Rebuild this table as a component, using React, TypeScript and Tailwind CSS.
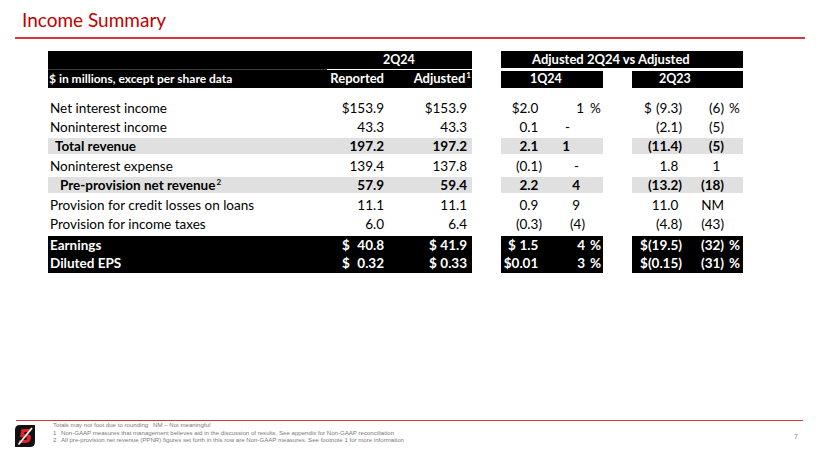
import React from 'react';

type Kind = 'n' | 'g' | 'k';
type Row = {
  label: string;
  sup?: string;
  kind: Kind;
  ind: string;
  band: string;
  rep: string;
  adj: string;
  a: string;
  b: string;
  bpr: string;
  bpct?: boolean;
  d: string;
  e: string;
  epct?: boolean;
};

const rows: Row[] = [
  { label: 'Net interest income', kind: 'n', ind: 'pl-[2px]', band: 'h-full', rep: '$153.9', adj: '$153.9', a: '$2.0', b: '1', bpr: 'pr-[5px]', bpct: true, d: '$ (9.3)', e: '(6)', epct: true },
  { label: 'Noninterest income', kind: 'n', ind: 'pl-[2px]', band: 'h-full', rep: '43.3', adj: '43.3', a: '0.1', b: '-', bpr: 'pr-[19px]', d: '(2.1)', e: '(5)' },
  { label: 'Total revenue', kind: 'g', ind: 'pl-[7px]', band: 'h-[16px] bg-[#e0e0e0]', rep: '197.2', adj: '197.2', a: '2.1', b: '1', bpr: 'pr-[19px]', d: '(11.4)', e: '(5)' },
  { label: 'Noninterest expense', kind: 'n', ind: 'pl-[2px]', band: 'h-full', rep: '139.4', adj: '137.8', a: '(0.1)', b: '-', bpr: 'pr-[10px]', d: '1.8', e: '1' },
  { label: 'Pre-provision net revenue', sup: '2', kind: 'g', ind: 'pl-[12px]', band: 'h-[16px] bg-[#e0e0e0]', rep: '57.9', adj: '59.4', a: '2.2', b: '4', bpr: 'pr-[9px]', d: '(13.2)', e: '(18)' },
  { label: 'Provision for credit losses on loans', kind: 'n', ind: 'pl-[2px]', band: 'h-full', rep: '11.1', adj: '11.1', a: '0.9', b: '9', bpr: 'pr-[9px]', d: '11.0', e: 'NM' },
  { label: 'Provision for income taxes', kind: 'n', ind: 'pl-[2px]', band: 'h-full', rep: '6.0', adj: '6.4', a: '(0.3)', b: '(4)', bpr: 'pr-[4px]', d: '(4.8)', e: '(43)' },
  { label: 'Earnings', kind: 'k', ind: 'pl-[2px]', band: 'h-[17px] self-end bg-black text-white', rep: '$ 40.8', adj: '$ 41.9', a: '$ 1.5', b: '4', bpr: 'pr-[4px]', bpct: true, d: '$(19.5)', e: '(32)', epct: true },
  { label: 'Diluted EPS', kind: 'k', ind: 'pl-[2px]', band: 'h-full bg-black text-white', rep: '$ 0.32', adj: '$ 0.33', a: '$0.01', b: '3', bpr: 'pr-[4px]', bpct: true, d: '$(0.15)', e: '(31)', epct: true },
];

function Acc({ t, pl, paren = true }: { t: string; pl: string; paren?: boolean }) {
  const hang = paren && !t.endsWith(')') && t !== 'NM' && t !== '-';
  if (t.startsWith('$ ')) {
    return (
      <div className={`flex w-full justify-between ${pl}`}>
        <span>$</span>
        <span>
          {t.slice(2)}
          {hang && <span className="invisible">)</span>}
        </span>
      </div>
    );
  }
  return (
    <div className="w-full text-right">
      {t}
      {hang && <span className="invisible">)</span>}
    </div>
  );
}

function DataRow({ r }: { r: Row }) {
  const weight = r.kind === 'n' ? 'font-normal' : 'font-bold';
  return (
    <div className={`flex h-[19.4px] items-center ${weight}`}>
      <div className={`flex w-[424px] items-center ${r.band}`}>
        <div className={`w-[252px] whitespace-nowrap ${r.ind}`}>
          {r.label}
          {r.sup && <sup className="ml-[1px] text-[8px] top-[-5px]">{r.sup}</sup>}
        </div>
        <div className="flex w-[84px]">
          <Acc t={r.rep} pl="pl-[42px]" paren={false} />
        </div>
        <div className="flex w-[83px]">
          <Acc t={r.adj} pl="pl-[45px]" paren={false} />
        </div>
      </div>
      <div className="w-[29px]" />
      <div className={`flex w-[102px] items-center ${r.band}`}>
        <div className="flex w-[41px]">
          <Acc t={r.a} pl="pl-[7px]" />
        </div>
        <div className={`w-[47px] text-right ${r.bpr}`}>{r.b}</div>
        <div className="w-[14px] pl-[1px]">{r.bpct ? '%' : ''}</div>
      </div>
      <div className="w-[29px]" />
      <div className={`flex w-[111px] items-center ${r.band}`}>
        <div className="flex w-[50px]">
          <Acc t={r.d} pl="pl-[12px]" />
        </div>
        <div className="flex w-[42px]">
          <Acc t={r.e} pl="pl-0" />
        </div>
        <div className="w-[19px] pl-[5px]">{r.epct ? '%' : ''}</div>
      </div>
    </div>
  );
}

function Logo() {
  return (
    <svg width="20" height="22" viewBox="0 0 20 22" className="block">
      <path d="M5 0 H20 V17 Q20 22 15 22 H0 V5 Q0 0 5 0 Z" fill="#111" />
      <path d="M6.5 4 H16.5 L15.6 7 H9.6 L9 9.2 H12.2 Q16.6 9.2 15.9 13.4 Q15.2 18 9.6 18 H3.6 L4.5 15 H9.8 Q12 15 12.2 13.5 Q12.4 12.2 10.8 12.2 H5 Z" fill="#e3212b" />
      <path d="M17 3 L3.5 19.5" stroke="#fff" strokeWidth="1.7" />
    </svg>
  );
}

export default function App() {
  return (
    <div className="relative flex h-[461px] w-[820px] flex-col overflow-hidden bg-white font-['Lato',sans-serif] text-black">
      <div className="ml-[22px] mt-[8px] text-[19px] leading-[23px] text-[#c00000]">Income Summary</div>
      <div className="ml-[15px] mt-[6px] h-[2px] w-[790px] bg-[#d7373f]" />

      <div className="ml-[48px] mt-[12px] flex text-[13px] font-bold text-white">
        <div className="flex w-[424px] flex-col">
          <div className="flex h-[18px] items-center bg-black pl-[335px] text-[12.5px]">2Q24</div>
          <div className="flex h-[1px]">
            <div className="w-[279px] bg-[#3c3c3c]" />
            <div className="flex-1 bg-white" />
          </div>
          <div className="flex h-[18px] items-center bg-black">
            <div className="w-[252px] whitespace-nowrap pl-[1px] text-[12px]">$ in millions, except per share data</div>
            <div className="w-[84px] text-right">Reported</div>
            <div className="w-[87px] text-right">
              Adjusted<sup className="ml-[1px] text-[8px] top-[-5px]">1</sup>
            </div>
          </div>
        </div>
        <div className="w-[29px]" />
        <div className="flex w-[242px] flex-col">
          <div className="flex h-[17px] items-center bg-black pl-[31px]">Adjusted 2Q24 vs Adjusted</div>
          <div className="h-[3px]" />
          <div className="flex h-[17px] justify-between text-[12.5px]">
            <div className="flex w-[102px] items-center bg-black pl-[29px]">1Q24</div>
            <div className="flex w-[111px] items-center bg-black pl-[27px]">2Q23</div>
          </div>
        </div>
      </div>

      <div className="ml-[48px] mt-[10px] flex flex-col text-[13.5px]">
        {rows.map((r) => (
          <DataRow key={r.label} r={r} />
        ))}
      </div>

      <div className="mt-auto flex h-[41px] flex-col">
        <div className="ml-[16px] h-[1px] w-[787px] bg-[#d7373f]" />
        <div className="flex">
          <div className="ml-[15px] mt-[4px]">
            <Logo />
          </div>
          <div className="ml-[18px] flex flex-col font-['Liberation_Sans',Arial,sans-serif] text-[6.1px] leading-[7.5px] text-[#7a7a7a]">
            <div className="flex whitespace-nowrap">
              <span className="w-[100px]">Totals may not foot due to rounding</span>
              <span>NM – Not meaningful</span>
            </div>
            <div className="flex whitespace-nowrap">
              <span className="w-[8px]">1</span>
              <span>Non-GAAP measures that management believes aid in the discussion of results. See appendix for Non-GAAP reconciliation</span>
            </div>
            <div className="flex whitespace-nowrap">
              <span className="w-[8px]">2</span>
              <span>All pre-provision net revenue (PPNR) figures set forth in this row are Non-GAAP measures. See footnote 1 for more information</span>
            </div>
          </div>
          <div className="ml-auto mr-[22px] mt-[11px] font-['Liberation_Sans',Arial,sans-serif] text-[7px] text-[#8a8a8a]">7</div>
        </div>
      </div>
    </div>
  );
}
